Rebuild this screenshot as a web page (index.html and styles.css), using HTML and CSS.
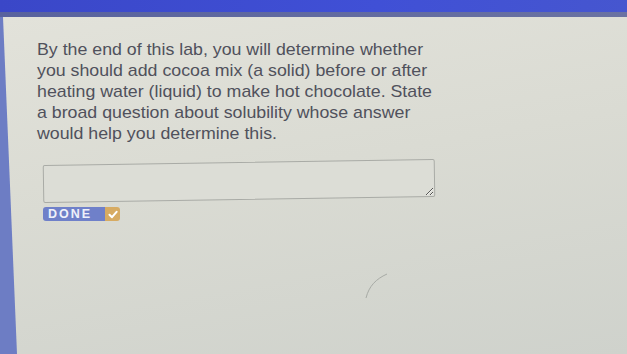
FILE: index.html
```html
<!DOCTYPE html>
<html lang="en">
<head>
    <meta charset="UTF-8">
    <meta name="viewport" content="width=device-width, initial-scale=1.0">
    <title>Lab Question</title>
    <link rel="stylesheet" href="styles.css">
</head>
<body>

    <div class="topbar"></div>
    <div class="shade"></div>

    <div class="sheet">
        <p class="prompt">
            By the end of this lab, you will determine whether<br>
            you should add cocoa mix (a solid) before or after<br>
            heating water (liquid) to make hot chocolate. State<br>
            a broad question about solubility whose answer<br>
            would help you determine this.
        </p>

        <textarea class="answer"></textarea>

        <button class="done">
            <span class="label">DONE</span>
            <span class="tick">
                <svg width="10" height="9" viewBox="0 0 10 9">
                    <path d="M1.5 4.8 L4 7.2 L8.6 1.8" fill="none" stroke="#fff" stroke-width="2" stroke-linecap="round" stroke-linejoin="round"/>
                </svg>
            </span>
        </button>

        <svg class="scratch" width="30" height="30" viewBox="0 0 30 30">
            <path d="M26 3 C 15 8, 8 15, 5 27" fill="none" stroke="#8a8e8a" stroke-width="1"/>
        </svg>
    </div>

</body>
</html>
```

FILE: styles.css
```css
html, body {
    margin: 0;
    padding: 0;
    height: 100%;
}

body {
    background: #6d7dc4;
    font-family: "Liberation Sans", Arial, sans-serif;
    display: flex;
    flex-direction: column;
    overflow: hidden;
}

.topbar {
    height: 12px;
    background: linear-gradient(90deg, #3a47c8, #4050d6 60%, #4656cf);
}

.shade {
    height: 5px;
    background: linear-gradient(90deg, #58629e, #6a72a2);
}

.sheet {
    flex: 1;
    background: linear-gradient(170deg, #e2e2da 0%, #dadbd3 45%, #cfd2cc 100%);
    clip-path: polygon(3px 0, 100% 0, 100% 100%, 17px 100%);
    padding: 22px 0 0 37px;
}

.prompt {
    margin: 0;
    width: 400px;
    white-space: nowrap;
    font-size: 17px;
    line-height: 21px;
    color: #50515c;
    transform: scaleX(1.045);
    transform-origin: left top;
}

.answer {
    display: block;
    box-sizing: border-box;
    width: 392px;
    height: 38px;
    margin: 18px 0 0 6px;
    border: 1px solid #a9aba6;
    border-radius: 2px;
    background: #dcddd6;
    resize: vertical;
    transform: rotate(-0.9deg);
}

.done {
    display: flex;
    margin: 7px 0 0 6px;
    padding: 0;
    border: 0;
    background: none;
    height: 14px;
    border-radius: 3px;
    overflow: hidden;
}

.label {
    background: #6f80c9;
    color: #eef0fa;
    font-weight: bold;
    font-size: 12.5px;
    line-height: 14px;
    letter-spacing: 2px;
    padding: 0 0 0 5px;
    width: 57px;
    text-align: left;
}

.tick {
    width: 15px;
    background: #d7ab62;
    display: flex;
    align-items: center;
    justify-content: center;
}

.scratch {
    display: block;
    margin: 50px 0 0 324px;
    opacity: 0.6;
}
```
